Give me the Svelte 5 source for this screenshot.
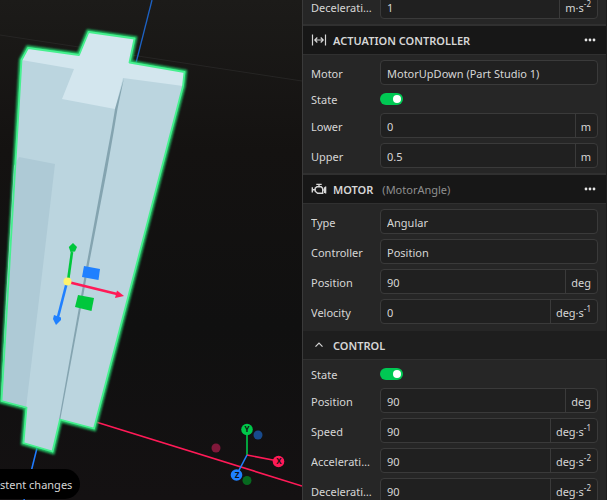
<script lang="ts">
	type Field = {
		label: string;
		kind: 'number' | 'select' | 'toggle';
		value?: string;
		unit?: string;
		power?: string;
		on?: boolean;
	};

	type Section = {
		title: string;
		icon?: 'range' | 'engine' | 'chevron';
		note?: string;
		fields: Field[];
	};

	let sections: Section[] = [
		{
			title: '',
			fields: [{ label: 'Deceleration', kind: 'number', value: '1', unit: 'm·s', power: '-2' }]
		},
		{
			title: 'ACTUATION CONTROLLER',
			icon: 'range',
			fields: [
				{ label: 'Motor', kind: 'select', value: 'MotorUpDown (Part Studio 1)' },
				{ label: 'State', kind: 'toggle', on: true },
				{ label: 'Lower', kind: 'number', value: '0', unit: 'm' },
				{ label: 'Upper', kind: 'number', value: '0.5', unit: 'm' }
			]
		},
		{
			title: 'MOTOR',
			icon: 'engine',
			note: '(MotorAngle)',
			fields: [
				{ label: 'Type', kind: 'select', value: 'Angular' },
				{ label: 'Controller', kind: 'select', value: 'Position' },
				{ label: 'Position', kind: 'number', value: '90', unit: 'deg' },
				{ label: 'Velocity', kind: 'number', value: '0', unit: 'deg·s', power: '-1' }
			]
		},
		{
			title: 'CONTROL',
			icon: 'chevron',
			fields: [
				{ label: 'State', kind: 'toggle', on: true },
				{ label: 'Position', kind: 'number', value: '90', unit: 'deg' },
				{ label: 'Speed', kind: 'number', value: '90', unit: 'deg·s', power: '-1' },
				{ label: 'Acceleration', kind: 'number', value: '90', unit: 'deg·s', power: '-2' },
				{ label: 'Deceleration', kind: 'number', value: '90', unit: 'deg·s', power: '-2' }
			]
		}
	];

	let controlOpen = true;

	const outline =
		'28,48 79,55 88.5,32 134.5,38.5 129.5,62.5 184.5,72 183,86 94,428.5 60,419.5 52.5,451.5 23.5,443 26.5,407.5 1.5,401 21.5,60';
</script>

<main>
	<div class="viewport">
		<svg class="scene" viewBox="0 0 302 500" preserveAspectRatio="xMidYMid slice">
			<defs>
				<filter id="glow" x="-10%" y="-10%" width="120%" height="120%">
					<feGaussianBlur stdDeviation="0.9" />
				</filter>
			</defs>

			<!-- world axes -->
			<path d="M0 35L302 81" stroke="#262524" />
			<path d="M152 0L136 63" stroke="#1d62c4" stroke-width="1.3" />
			<path d="M37 448L24 500" stroke="#1f7bff" stroke-width="1.6" />
			<path d="M96 422L302 486" stroke="#ff1a57" stroke-width="1.6" />

			<!-- selected part -->
			<polygon points={outline} fill="none" stroke="#22c566" stroke-width="5" filter="url(#glow)" />
			<polygon points={outline} fill="#bbd5df" />
			<polygon points="19,157 55,164 39,300 26,408 1,401 6,300 14,166" fill="#aecad6" />
			<polygon
				points="28,48 79,55 88.5,32 134.5,38.5 129.5,62.5 184.5,72 183,86 123,78 115,109 62,99 74,69 21.5,60"
				fill="#d3e6ee"
			/>
			<polygon
				points="124,78 115,109 111.5,130 104,170 86.5,265 78.5,310 59,420 60.2,420 80.6,310 88.8,265 107,170 114,130 117.5,109"
				fill="#84a4b0"
			/>
			<polygon points={outline} fill="none" stroke="#45f08e" stroke-width="1.8" stroke-linejoin="round" />

			<!-- transform gizmo -->
			<polygon points="84,266 100,269 98.5,280 82,277" fill="#1f80ff" />
			<polygon points="78,295 94,298 91.5,311 75,307" fill="#00c73c" />
			<path d="M68 281L72 252" stroke="#00c73c" stroke-width="2.6" />
			<polygon points="73,243 77,247 75,251.5 70.5,252 68.8,247" fill="#00c73c" />
			<path d="M67 282L58 317" stroke="#1f80ff" stroke-width="2.6" />
			<polygon points="54,315 61,317.5 61,320 56,325 53,319" fill="#1f80ff" />
			<path d="M68 282L117 294" stroke="#ff1a57" stroke-width="2.4" />
			<polygon points="117,290.5 124,296 115,298" fill="#ff1a57" />
			<circle cx="67.5" cy="281.5" r="4" fill="#fff36b" />

			<!-- orientation gizmo -->
			<circle cx="216" cy="448" r="4.5" fill="#80183a" />
			<circle cx="258" cy="435" r="4.5" fill="#184a8c" />
			<circle cx="247" cy="480.5" r="4.5" fill="#07691f" />
			<path d="M247 455V430" stroke="#00c84a" stroke-width="1.6" />
			<path d="M247 455L278 461" stroke="#ff1a57" stroke-width="1.6" />
			<path d="M247 455L237 474" stroke="#1f80ff" stroke-width="1.6" />
			<circle cx="247" cy="429.5" r="5.8" fill="#00c84a" />
			<circle cx="278.5" cy="461.5" r="5.8" fill="#ff1a57" />
			<circle cx="236.5" cy="475" r="5.8" fill="#1f80ff" />
			<g class="axis-names">
				<text x="247" y="432">Y</text>
				<text x="279" y="464">X</text>
				<text x="237" y="478">Z</text>
			</g>
		</svg>
		<div class="toast">stent changes</div>
	</div>

	<aside class="panel">
		{#each sections as section, s}
			<section>
				{#if section.title}
					<header class:plain={section.icon === 'chevron'}>
						{#if section.icon === 'chevron'}
							<button
								class="collapse"
								aria-label="Toggle section"
								aria-expanded={controlOpen}
								on:click={() => (controlOpen = !controlOpen)}
							>
								<svg class="icon" viewBox="0 0 16 16">
									<path d="M4.5 9.7L8 6.2l3.5 3.5" />
								</svg>
							</button>
						{:else if section.icon === 'range'}
							<svg class="icon" viewBox="0 0 16 16">
								<path d="M1.5 2.5v11M14.5 2.5v11M4 8h8M6.3 5.5L3.8 8l2.5 2.5M9.7 5.5L12.2 8l-2.5 2.5" />
							</svg>
						{:else}
							<svg class="icon engine" viewBox="0 0 16 16">
								<path
									d="M1.3 6.2v5.2M1.3 8.8h2.5M5.3 3.4h5.4M8 3.4v2.4M6 5.8h4.2l1.5 1.6v4.8H6.6l-2.4-2V7.2zM11.7 9h1.2M13.7 6.3v5.8M14.6 5.6v7"
								/>
							</svg>
						{/if}
						<h2>{section.title}</h2>
						{#if section.note}<span class="note">{section.note}</span>{/if}
						{#if section.icon !== 'chevron'}
							<button class="more" aria-label="More">
								<svg viewBox="0 0 12 4">
									<circle cx="2" cy="2" r="1.4" />
									<circle cx="6" cy="2" r="1.4" />
									<circle cx="10" cy="2" r="1.4" />
								</svg>
							</button>
						{/if}
					</header>
				{/if}
				{#if section.icon !== 'chevron' || controlOpen}
					<div class="fields">
						{#each section.fields as field, f}
							<div class="row" class:short={field.kind === 'toggle'}>
								<label for="field-{s}-{f}">{field.label}</label>
								{#if field.kind === 'toggle'}
									<input class="toggle" type="checkbox" id="field-{s}-{f}" bind:checked={field.on} />
								{:else if field.kind === 'select'}
									<select class="box" id="field-{s}-{f}">
										<option>{field.value}</option>
									</select>
								{:else}
									<div class="box">
										<input type="text" id="field-{s}-{f}" bind:value={field.value} />
										<span class="unit"
											>{field.unit}{#if field.power}<sup>{field.power}</sup>{/if}</span
										>
									</div>
								{/if}
							</div>
						{/each}
					</div>
				{/if}
			</section>
		{/each}
	</aside>
</main>

<style>
	:global(body) {
		margin: 0;
		background: #121111;
	}

	main {
		display: flex;
		height: 100vh;
		overflow: hidden;
		font-family: 'Noto Sans', 'Open Sans', sans-serif;
		font-size: 11px;
		line-height: 16px;
		color: #d6d6d6;
	}

	.viewport {
		position: relative;
		flex: 1;
		min-width: 0;
		overflow: hidden;
		background: linear-gradient(#1c1b19, #141211 30%, #101010 65%, #141112);
	}

	.scene {
		display: block;
		width: 100%;
		height: 100%;
	}

	.axis-names {
		fill: #111;
		font-size: 8px;
		font-weight: 700;
		text-anchor: middle;
	}

	.toast {
		position: absolute;
		left: 0;
		bottom: 1px;
		padding: 8px 8px 6px 0;
		border-radius: 0 15px 15px 0;
		background: #000;
		white-space: nowrap;
	}

	.panel {
		box-sizing: border-box;
		display: flex;
		flex-direction: column;
		justify-content: flex-start;
		width: 50%;
		min-width: 305px;
		border-left: 1px solid #3a3a3a;
		border-right: 1px solid #1c1c1c;
		background: #262626;
	}

	section {
		flex: none;
	}

	/* scrolled a little, so the first row is partly out of view */
	section:first-child {
		margin-top: -11px;
	}

	header {
		box-sizing: border-box;
		display: flex;
		align-items: center;
		height: 31px;
		padding: 0 10px 0 8px;
		border-top: 2px solid #303030;
		border-bottom: 1px solid #303030;
		background: #171717;
	}

	header.plain {
		border-top-color: #262626;
		background: #1e1e1e;
	}

	h2,
	.note {
		padding-top: 1px;
	}

	h2 {
		margin: 0 0 0 6px;
		font-size: 11px;
		font-weight: 600;
	}

	.note {
		margin-left: 9px;
		color: #8f8f8f;
	}

	.icon {
		display: block;
		width: 16px;
		height: 16px;
		fill: none;
		stroke: #d6d6d6;
		stroke-width: 1.2;
	}

	.engine {
		stroke-width: 1.4;
	}

	button {
		display: block;
		padding: 0;
		border: none;
		background: none;
	}

	.more {
		width: 12px;
		margin-left: auto;
	}

	.more svg {
		display: block;
		fill: #e6e6e6;
	}

	.fields {
		display: flex;
		flex-direction: column;
		gap: 5px;
		padding: 5px 8px;
	}

	.row {
		display: grid;
		grid-template-columns: 61px 1fr;
		gap: 8px;
		align-items: center;
		height: 25px;
	}

	.row.short {
		height: 18px;
	}

	label {
		padding-top: 2px;
		overflow: hidden;
		white-space: nowrap;
		text-overflow: ellipsis;
	}

	.box {
		box-sizing: border-box;
		display: flex;
		width: 100%;
		min-width: 0;
		height: 25px;
		border: 1px solid #3a3a3a;
		border-radius: 4px;
		background: #202020;
	}

	select,
	input[type='text'] {
		padding: 2px 6px 0;
		font: inherit;
		color: inherit;
		appearance: none;
		outline: none;
	}

	input[type='text'] {
		flex: 1;
		min-width: 0;
		border: none;
		background: none;
	}

	.unit {
		padding: 5px 6px 0 5px;
		border-left: 1px solid #3a3a3a;
	}

	sup {
		font-size: 8px;
		line-height: 0;
		vertical-align: 5px;
	}

	.toggle {
		display: flex;
		align-items: center;
		justify-content: flex-end;
		box-sizing: border-box;
		width: 23px;
		height: 12px;
		margin: 0;
		padding: 0 2px;
		border-radius: 6px;
		background: #00c853;
		appearance: none;
	}

	.toggle:not(:checked) {
		justify-content: flex-start;
		background: #4a4a4a;
	}

	.toggle::before {
		content: '';
		width: 8px;
		height: 8px;
		border-radius: 50%;
		background: #fff;
	}
</style>
